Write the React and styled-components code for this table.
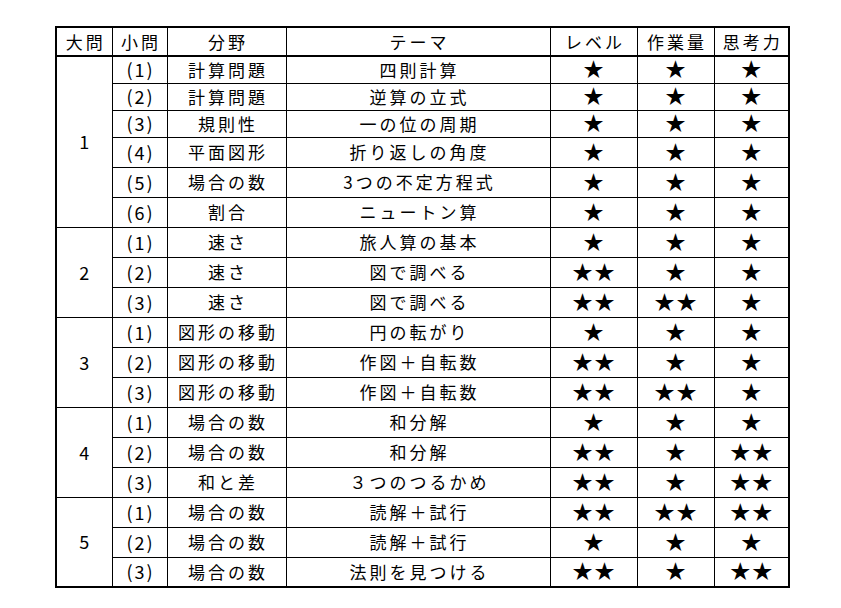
import React from 'react';
import styled, { createGlobalStyle } from 'styled-components';

const GlobalStyle = createGlobalStyle`
  html, body {
    margin: 0;
    padding: 0;
    background: #fff;
  }
  body {
    font-family: "Noto Sans CJK JP", "Noto Sans", sans-serif;
    color: #000;
  }
`;

const Page = styled.div`
  padding: 26px 0 0 55px;
`;

const Table = styled.table`
  border-collapse: collapse;
  table-layout: fixed;
  width: 733px;
  border: 2px solid #000;
  font-size: 17px;
`;

const HeadCell = styled.th`
  height: 26px;
  padding: 0 0 1px 3px;
  border: 1px solid #000;
  border-bottom: 2px solid #000;
  font-weight: 400;
  letter-spacing: 3px;
  text-align: center;
  line-height: 1;
`;

const Row = styled.tr`
  height: ${({ $short }) => ($short ? '27px' : '30px')};
`;

const Cell = styled.td`
  padding: 0 0 1px ${({ $spacing = 3 }) => $spacing}px;
  border: 1px solid #000;
  font-size: ${({ $size = 17 }) => $size}px;
  letter-spacing: ${({ $spacing = 3 }) => $spacing}px;
  text-align: center;
  vertical-align: middle;
  line-height: 1;
  white-space: nowrap;
`;

const Stars = styled(Cell)`
  font-size: 20px;
  letter-spacing: 2px;
  padding-left: 2px;
`;

const COLS = [56, 55, 119, 264, 87, 77, 75];
const HEADERS = ['大問', '小問', '分野', 'テーマ', 'レベル', '作業量', '思考力'];

const GROUPS = [
  {
    no: '1',
    rows: [
      ['(1)', '計算問題', '四則計算', 1, 1, 1],
      ['(2)', '計算問題', '逆算の立式', 1, 1, 1],
      ['(3)', '規則性', '一の位の周期', 1, 1, 1],
      ['(4)', '平面図形', '折り返しの角度', 1, 1, 1],
      ['(5)', '場合の数', '3つの不定方程式', 1, 1, 1],
      ['(6)', '割合', 'ニュートン算', 1, 1, 1],
    ],
  },
  {
    no: '2',
    rows: [
      ['(1)', '速さ', '旅人算の基本', 1, 1, 1],
      ['(2)', '速さ', '図で調べる', 2, 1, 1],
      ['(3)', '速さ', '図で調べる', 2, 2, 1],
    ],
  },
  {
    no: '3',
    rows: [
      ['(1)', '図形の移動', '円の転がり', 1, 1, 1],
      ['(2)', '図形の移動', '作図＋自転数', 2, 1, 1],
      ['(3)', '図形の移動', '作図＋自転数', 2, 2, 1],
    ],
  },
  {
    no: '4',
    rows: [
      ['(1)', '場合の数', '和分解', 1, 1, 1],
      ['(2)', '場合の数', '和分解', 2, 1, 2],
      ['(3)', '和と差', '３つのつるかめ', 2, 1, 2],
    ],
  },
  {
    no: '5',
    rows: [
      ['(1)', '場合の数', '読解＋試行', 2, 2, 2],
      ['(2)', '場合の数', '読解＋試行', 1, 1, 1],
      ['(3)', '場合の数', '法則を見つける', 2, 1, 2],
    ],
  },
];

const star = (n) => '★'.repeat(n);

const App = () => {
  let index = 0;
  return (
    <Page>
      <GlobalStyle />
      <Table>
        <colgroup>
          {COLS.map((w, i) => (
            // eslint-disable-next-line
            <col key={i} style={{ width: w }} />
          ))}
        </colgroup>
        <thead>
          <tr>
            {HEADERS.map((h) => (
              <HeadCell key={h}>{h}</HeadCell>
            ))}
          </tr>
        </thead>
        <tbody>
          {GROUPS.map((group) => group.rows.map((row, i) => {
            const [sub, field, theme, level, work, think] = row;
            const short = index < 3;
            index += 1;
            return (
              <Row key={`${group.no}-${sub}`} $short={short}>
                {i === 0 && (
                  <Cell rowSpan={group.rows.length} $size={18}>{group.no}</Cell>
                )}
                <Cell $spacing={2} $size={18}>{sub}</Cell>
                <Cell>{field}</Cell>
                <Cell>{theme}</Cell>
                <Stars>{star(level)}</Stars>
                <Stars>{star(work)}</Stars>
                <Stars>{star(think)}</Stars>
              </Row>
            );
          }))}
        </tbody>
      </Table>
    </Page>
  );
};

export default App;
